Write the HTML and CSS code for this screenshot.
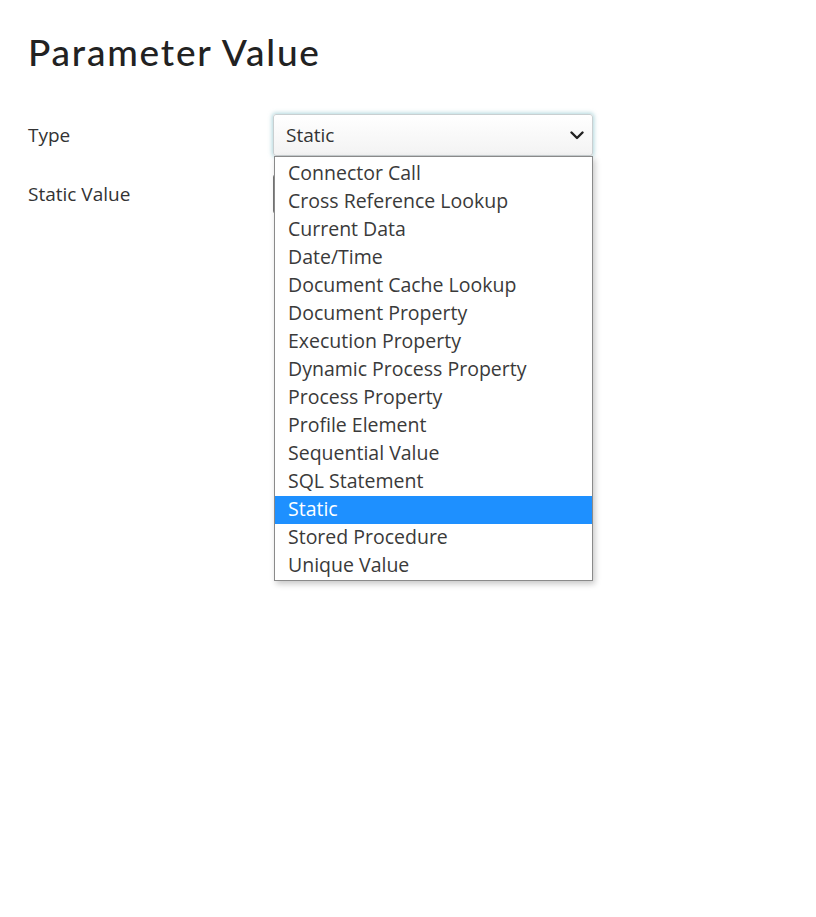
FILE: index.html
```html
<!DOCTYPE html>
<html>
<head>
<meta charset="utf-8">
<link rel="stylesheet" href="styles.css">
</head>
<body>
<div class="page">
  <h1 class="title">Parameter Value</h1>
  <div class="form">
    <div class="row">
      <div class="label">Type</div>
      <div class="field">
        <div class="select">
          <span>Static</span>
          <svg class="chev" width="14" height="9" viewBox="0 0 14 9"><path d="M1.5 1.5 L7 7 L12.5 1.5" fill="none" stroke="#222" stroke-width="2.4" stroke-linecap="round" stroke-linejoin="round"/></svg>
        </div>
        <ul class="menu">
          <li>Connector Call</li>
          <li>Cross Reference Lookup</li>
          <li>Current Data</li>
          <li>Date/Time</li>
          <li>Document Cache Lookup</li>
          <li>Document Property</li>
          <li>Execution Property</li>
          <li>Dynamic Process Property</li>
          <li>Process Property</li>
          <li>Profile Element</li>
          <li>Sequential Value</li>
          <li>SQL Statement</li>
          <li class="sel">Static</li>
          <li>Stored Procedure</li>
          <li>Unique Value</li>
        </ul>
      </div>
    </div>
    <div class="row">
      <div class="label">Static Value</div>
      <div class="field">
        <div class="input"></div>
      </div>
    </div>
  </div>
</div>
</body>
</html>
```

FILE: styles.css
```css
html, body {
  margin: 0;
  padding: 0;
  background: #fff;
}
body {
  min-height: 917px;
}
.page {
  min-height: 917px;
  box-sizing: border-box;
  padding: 28px 28px 0 28px;
  font-family: "Open Sans", "Liberation Sans", sans-serif;
  color: #333;
}
.title {
  margin: 0 0 38px 0;
  font-family: Lato, "Noto Sans", sans-serif;
  font-weight: 500;
  font-size: 37px;
  line-height: 48px;
  color: #222;
  letter-spacing: 1.8px;
}
.form {
  display: flex;
  flex-direction: column;
  gap: 18px;
}
.row {
  display: grid;
  grid-template-columns: 245px 320px;
  align-items: center;
}
.label {
  font-size: 19px;
  color: #333;
}
.field {
  position: relative;
}
.select {
  height: 42px;
  box-sizing: border-box;
  border: 1px solid #c9cfd1;
  border-radius: 3px;
  background: linear-gradient(#ffffff, #f3f3f3);
  box-shadow: 0 0 4px 1px rgba(110, 180, 190, 0.55);
  display: flex;
  align-items: center;
  justify-content: space-between;
  padding: 0 8px 0 12px;
  font-size: 19px;
  color: #333;
}
.chev {
  display: block;
}
.menu {
  position: absolute;
  z-index: 5;
  top: 42px;
  left: 1px;
  right: 0;
  margin: 0;
  padding: 3px 0 0 0;
  list-style: none;
  background: #fff;
  border: 1px solid #8a8a8a;
  box-shadow: 2px 3px 6px rgba(0, 0, 0, 0.22);
}
.menu li {
  height: 28px;
  line-height: 25px;
  padding-left: 13px;
  font-size: 19.5px;
  color: #3a3a3a;
  white-space: nowrap;
}
.menu li.sel {
  background: #1e90ff;
  color: #fff;
}
.input {
  height: 40px;
  box-sizing: border-box;
  border: 1px solid #777;
  border-radius: 3px;
}
```
